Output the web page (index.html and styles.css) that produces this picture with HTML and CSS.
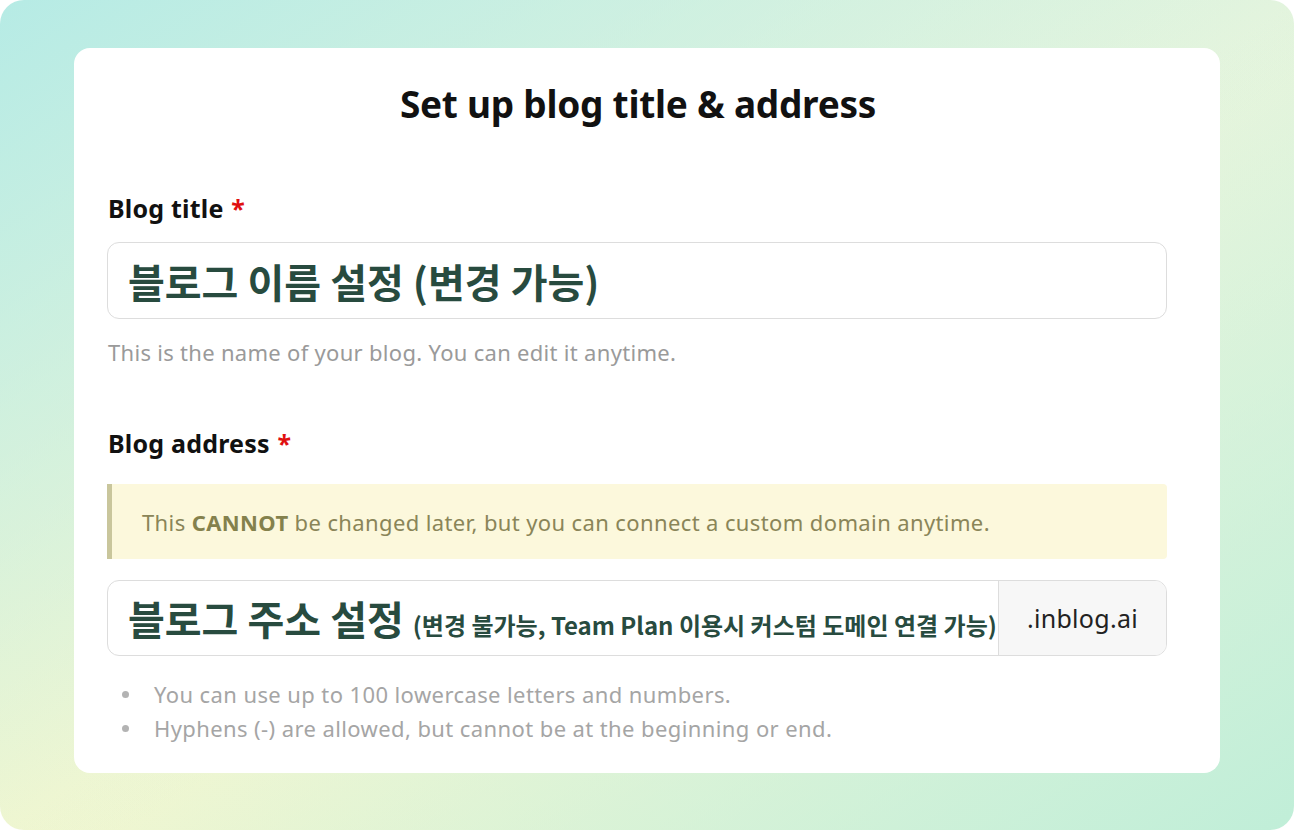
FILE: index.html
```html
<!DOCTYPE html>
<html lang="en">
<head>
<meta charset="utf-8">
<title>Set up blog title &amp; address</title>
<link rel="stylesheet" href="styles.css">
</head>
<body>
<div class="frame">
  <div class="card">
    <h1 class="title">Set up blog title &amp; address</h1>

    <div class="label label-first">Blog title <span class="req">*</span></div>
    <div class="field field-title">
      <span class="ko-big">블로그 이름 설정 (변경 가능)</span>
    </div>
    <div class="help">This is the name of your blog. You can edit it anytime.</div>

    <div class="label label-second">Blog address <span class="req">*</span></div>
    <div class="notice"><span>This <b>CANNOT</b> be changed later, but you can connect a custom domain anytime.</span></div>

    <div class="field field-address">
      <div class="address-value">
        <span class="ko-big">블로그 주소 설정</span>
        <span class="ko-small">(변경 불가능, Team Plan 이용시 커스텀 도메인 연결 가능)</span>
      </div>
      <div class="suffix">.inblog.ai</div>
    </div>

    <ul class="rules">
      <li>You can use up to 100 lowercase letters and numbers.</li>
      <li>Hyphens (-) are allowed, but cannot be at the beginning or end.</li>
    </ul>
  </div>
</div>
</body>
</html>
```

FILE: styles.css
```css
html, body {
  margin: 0;
  padding: 0;
  background: #ffffff;
}

body {
  width: 1294px;
  height: 830px;
  overflow: hidden;
  font-family: "Noto Sans", "Noto Sans CJK KR", sans-serif;
}

.frame {
  width: 1294px;
  height: 830px;
  box-sizing: border-box;
  border-radius: 24px;
  padding: 48px 74px 0 74px;
  background:
    linear-gradient(to bottom right, rgba(182, 235, 229, 1) 0%, rgba(182, 235, 229, 0) 55%),
    linear-gradient(to top left, rgba(192, 238, 216, 1) 0%, rgba(192, 238, 216, 0) 50%),
    linear-gradient(to top right, #f4f7cf 0%, #eaf6dc 50%, #e7f5dd 100%);
}

.card {
  width: 1146px;
  height: 725px;
  box-sizing: border-box;
  background: #ffffff;
  border-radius: 16px;
  padding: 34px 53px 0 33px;
  display: flex;
  flex-direction: column;
}

.title {
  margin: 0;
  font-size: 37px;
  line-height: 44px;
  font-weight: 700;
  color: #111111;
  text-align: center;
  padding-left: 2px;
  letter-spacing: -0.25px;
}

.label {
  font-size: 25px;
  line-height: 32px;
  font-weight: 700;
  color: #111111;
  padding-left: 1px;
  letter-spacing: 0.2px;
}

.label-first {
  margin-top: 66px;
}

.label-second {
  margin-top: 61px;
}

.req {
  color: #e01010;
  margin-left: 1px;
}

.field {
  box-sizing: border-box;
  border: 1px solid #dddddd;
  border-radius: 12px;
  display: flex;
  align-items: center;
}

.field-title {
  margin-top: 18px;
  height: 77px;
  padding-left: 20px;
}

.ko-big {
  font-family: "Noto Sans CJK KR", sans-serif;
  font-size: 40px;
  font-weight: 700;
  color: #284b3f;
}

.help {
  margin-top: 19px;
  font-size: 22px;
  line-height: 28px;
  color: #9a9a9a;
  padding-left: 1px;
  letter-spacing: 0.3px;
}

.notice {
  margin-top: 25px;
  height: 75px;
  box-sizing: border-box;
  background: #fcf8dc;
  border-left: 5px solid #c9c69c;
  border-radius: 0 4px 4px 0;
  padding-left: 30px;
  display: flex;
  align-items: center;
  font-size: 22px;
  color: #8a8558;
  letter-spacing: 0.38px;
}

.notice b {
  font-weight: 700;
  color: #84814c;
}

.field-address {
  margin-top: 21px;
  height: 76px;
  overflow: hidden;
}

.address-value {
  flex: 1;
  min-width: 0;
  padding-left: 20px;
  display: flex;
  align-items: baseline;
  gap: 9px;
  white-space: nowrap;
  overflow: hidden;
}

.ko-small {
  font-family: "Noto Sans CJK KR", sans-serif;
  font-size: 24px;
  font-weight: 700;
  color: #284b3f;
}

.suffix {
  flex: none;
  width: 168px;
  height: 100%;
  box-sizing: border-box;
  border-left: 1px solid #dddddd;
  background: #f7f7f7;
  display: flex;
  align-items: center;
  justify-content: center;
  font-size: 25px;
  color: #222222;
  letter-spacing: 0.3px;
}

.rules {
  list-style: none;
  margin: 21px 0 0 0;
  padding: 0 0 0 15px;
  font-size: 22px;
  line-height: 34px;
  color: #a5a5a5;
  letter-spacing: 0.4px;
}

.rules li {
  display: flex;
  align-items: center;
}

.rules li::before {
  content: "";
  flex: none;
  width: 7px;
  height: 7px;
  border-radius: 50%;
  background: #b3b3b3;
  margin-right: 25px;
}
```
